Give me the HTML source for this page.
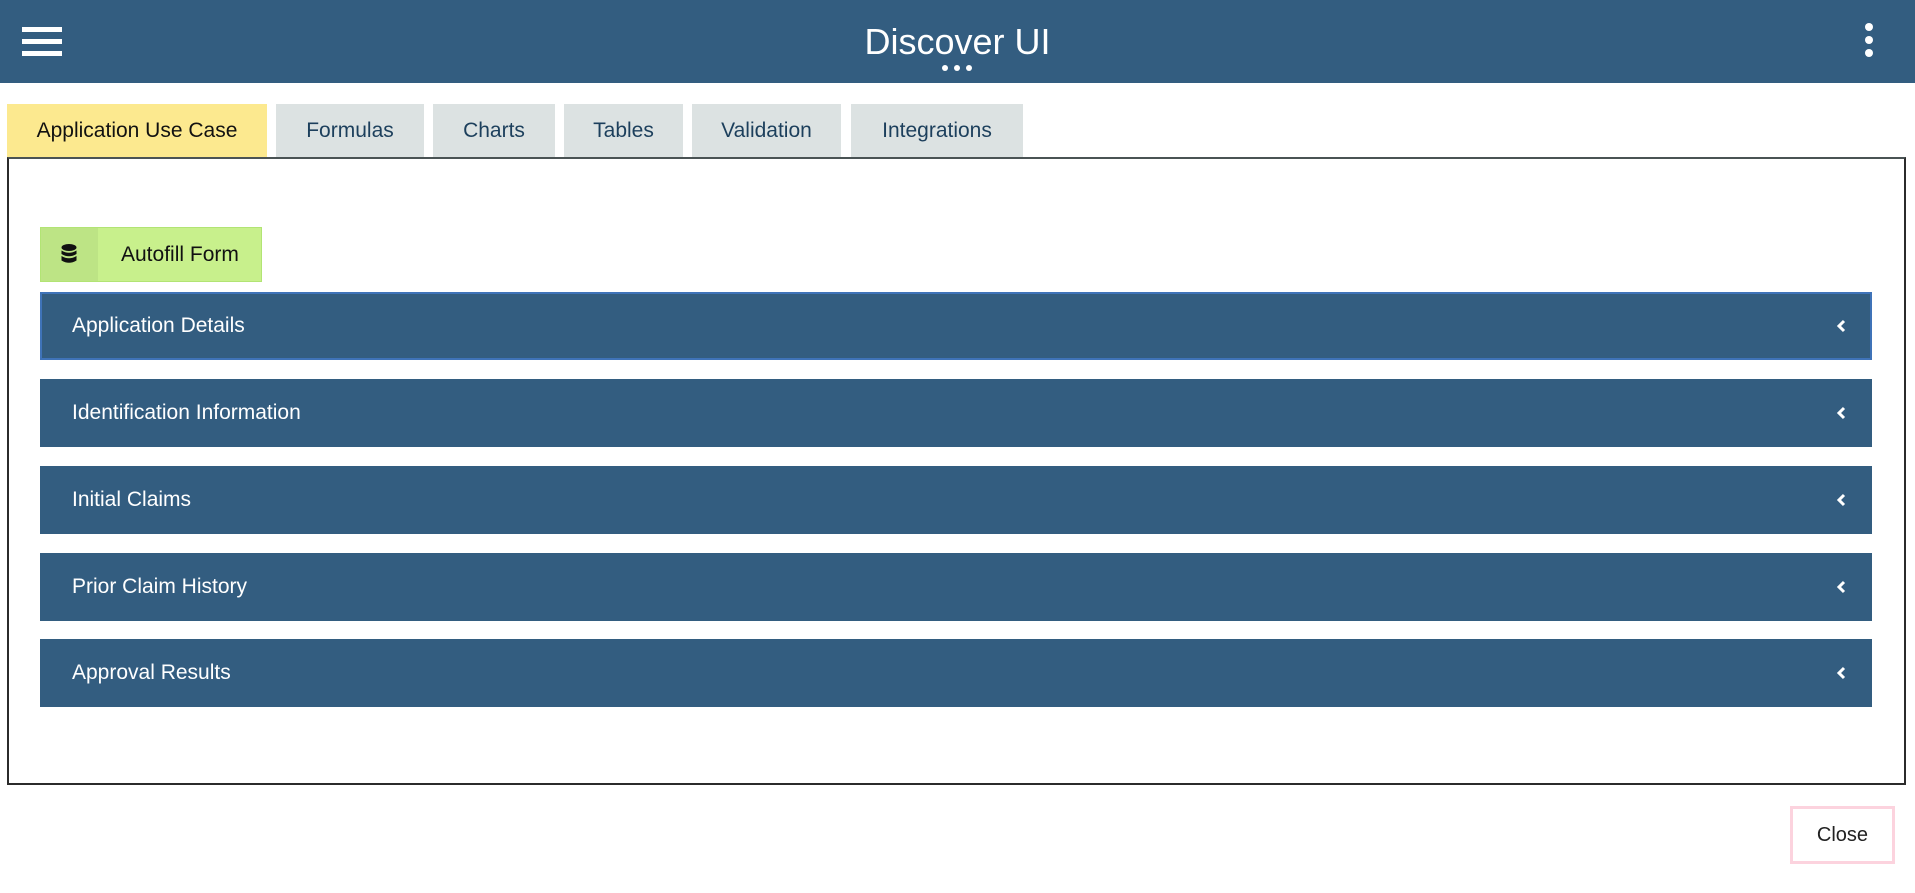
<!DOCTYPE html>
<html><head><meta charset="utf-8"><style>
*{box-sizing:border-box;margin:0;padding:0}
body{width:1915px;height:893px;background:#fff;font-family:"Liberation Sans",Arial,sans-serif;position:relative;overflow:hidden}
.hdr{position:absolute;left:0;top:0;width:1915px;height:83px;background:#335d80}
.ttl{position:absolute;left:0;width:1915px;top:21px;text-align:center;color:#fff;font-size:36px}
.hb{position:absolute;left:22px;width:40px;height:5px;background:#fff}
.dot{position:absolute;width:8px;height:8px;border-radius:50%;background:#fff}
.tab{position:absolute;top:104px;height:54px;background:#dce2e2;color:#1c3f5c;font-size:21px;line-height:54px;text-align:center}
.panel{position:absolute;left:7px;top:157px;width:1899px;height:628px;border:2px solid #2b2b2b;border-top-color:#4a5354}
.af{position:absolute;left:40px;top:227px;width:222px;height:55px;background:#c8f08c;border:1px solid #b2e474}
.af .ic{position:absolute;left:0;top:0;width:57px;height:53px;background:#bde485}
.af span{position:absolute;left:80px;top:15px;font-size:21px;color:#111}
.acc{position:absolute;left:40px;width:1832px;height:68px;background:#335d80;color:#fff;font-size:21px;line-height:68px;padding-left:32px}
.acc svg{position:absolute;right:26px;top:27px}
.close{position:absolute;left:1790px;top:806px;width:105px;height:58px;border:3px solid #fcd3de;font-size:20px;text-align:center;line-height:52px;color:#222}
</style></head><body>
<div class="hdr">
<div class="hb" style="top:27px"></div><div class="hb" style="top:39px"></div><div class="hb" style="top:51px"></div>
<div class="ttl">Discover UI</div>
<div class="dot" style="left:942px;top:65px;width:6px;height:6px"></div><div class="dot" style="left:954px;top:65px;width:6px;height:6px"></div><div class="dot" style="left:966px;top:65px;width:6px;height:6px"></div>
<div class="dot" style="left:1865px;top:23px"></div><div class="dot" style="left:1865px;top:36px"></div><div class="dot" style="left:1865px;top:49px"></div>
</div>
<div class="tab" style="left:7px;width:260px;background:#fce98f;color:#111">Application Use Case</div>
<div class="tab" style="left:276px;width:148px">Formulas</div>
<div class="tab" style="left:433px;width:122px">Charts</div>
<div class="tab" style="left:564px;width:119px">Tables</div>
<div class="tab" style="left:692px;width:149px">Validation</div>
<div class="tab" style="left:851px;width:172px">Integrations</div>
<div class="panel"></div>
<div class="af"><div class="ic"><svg style="position:absolute;left:20px;top:16px" width="16" height="21" viewBox="0 0 16 21"><ellipse cx="8" cy="3.5" rx="7.5" ry="3.5" fill="#111"/><path d="M0.5 6.5Q8 11 15.5 6.5V10Q8 14.5 0.5 10Z M0.5 12Q8 16.5 15.5 12V16.5Q8 21 0.5 16.5Z" fill="#111"/></svg></div><span>Autofill Form</span></div>
<div class="acc" style="top:292px;border:2px solid #3f73b8;line-height:64px;padding-left:30px">Application Details<svg width="10" height="14" viewBox="0 0 10 14" style="right:24px;top:25px"><path d="M8 2L3 7l5 5" stroke="#fff" stroke-width="3" fill="none"/></svg></div>
<div class="acc" style="top:379px">Identification Information<svg width="10" height="14" viewBox="0 0 10 14"><path d="M8 2L3 7l5 5" stroke="#fff" stroke-width="3" fill="none"/></svg></div>
<div class="acc" style="top:466px">Initial Claims<svg width="10" height="14" viewBox="0 0 10 14"><path d="M8 2L3 7l5 5" stroke="#fff" stroke-width="3" fill="none"/></svg></div>
<div class="acc" style="top:553px">Prior Claim History<svg width="10" height="14" viewBox="0 0 10 14"><path d="M8 2L3 7l5 5" stroke="#fff" stroke-width="3" fill="none"/></svg></div>
<div class="acc" style="top:639px">Approval Results<svg width="10" height="14" viewBox="0 0 10 14"><path d="M8 2L3 7l5 5" stroke="#fff" stroke-width="3" fill="none"/></svg></div>
<div class="close">Close</div>
</body></html>
